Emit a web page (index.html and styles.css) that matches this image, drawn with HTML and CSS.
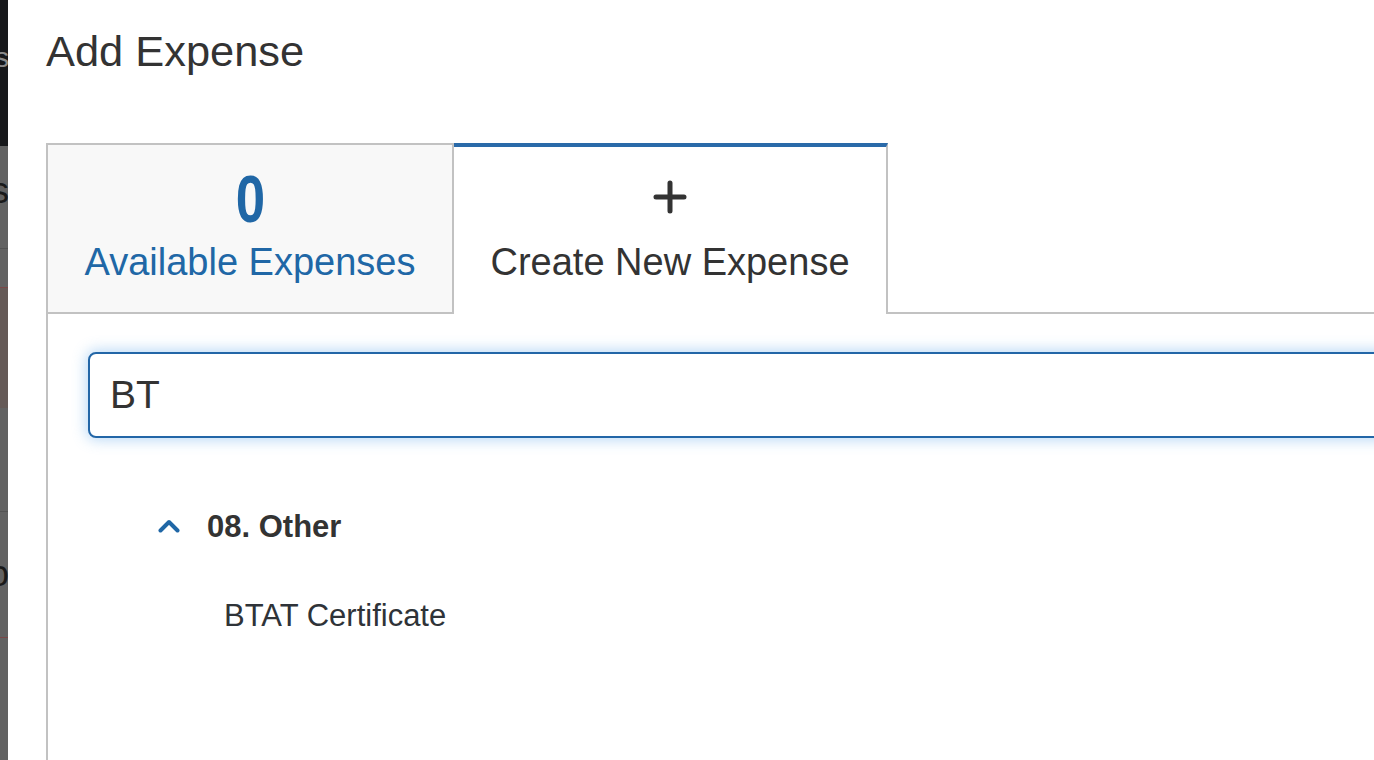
FILE: index.html
```html
<!DOCTYPE html>
<html lang="en">
<head>
<meta charset="utf-8">
<title>Add Expense</title>
<link rel="stylesheet" href="styles.css">
</head>
<body>
<div class="page">
  <div class="backdrop">
    <div class="seg seg-dark"><span class="peek peek-s">s</span></div>
    <div class="seg seg-gray1"><span class="peek peek-S">s</span></div>
    <div class="seg-line"></div>
    <div class="seg seg-gray2"></div>
    <div class="seg-line red"></div>
    <div class="seg seg-brown"></div>
    <div class="seg seg-gray3"></div>
    <div class="seg-line"></div>
    <div class="seg seg-gray4"><span class="peek peek-o">o</span></div>
    <div class="seg-line red"></div>
    <div class="seg seg-gray5"></div>
  </div>
  <div class="modal">
    <h4 class="modal-title">Add Expense</h4>
    <div class="tabs">
      <div class="tab tab-available">
        <div class="tab-count">0</div>
        <div class="tab-label">Available Expenses</div>
      </div>
      <div class="tab tab-create active">
        <div class="tab-icon">
          <svg width="34" height="34" viewBox="0 0 34 34"><path d="M3 17H31M17 3V31" stroke="#333" stroke-width="5" stroke-linecap="round" fill="none"/></svg>
        </div>
        <div class="tab-label">Create New Expense</div>
      </div>
      <div class="tab-fill"></div>
    </div>
    <div class="panel">
      <input class="search" type="text" value="BT">
      <div class="group">
        <div class="group-head">
          <svg class="chevron" width="22" height="14" viewBox="0 0 22 14"><path d="M2.5 11.5L11 3L19.5 11.5" stroke="#2067a6" stroke-width="4" stroke-linecap="round" stroke-linejoin="round" fill="none"/></svg>
          <span class="group-name">08. Other</span>
        </div>
        <div class="group-item">BTAT Certificate</div>
      </div>
    </div>
  </div>
</div>
</body>
</html>
```
FILE: styles.css
```css
html, body {
  margin: 0;
  padding: 0;
  height: 100%;
  overflow: hidden;
  background: #ffffff;
}
.page {
  display: flex;
  height: 760px;
  font-family: "Liberation Sans", Arial, sans-serif;
}
.backdrop {
  width: 8px;
  flex: 0 0 8px;
  display: flex;
  flex-direction: column;
  overflow: hidden;
}
.seg {
  display: flex;
  justify-content: flex-end;
  overflow: hidden;
  font-family: "Liberation Sans", Arial, sans-serif;
}
.seg-line { height: 1px; background: #535353; }
.seg-line.red { background: #7a4848; }
.seg-dark { height: 146px; background: #17181b; }
.seg-gray1 { height: 102px; background: #626262; }
.seg-gray2 { height: 38px; background: #626262; }
.seg-brown { height: 120px; background: #655a57; }
.seg-gray3 { height: 103px; background: #626262; }
.seg-gray4 { height: 125px; background: #626262; }
.seg-gray5 { flex: 1; background: #626262; }
.peek { flex: 0 0 auto; line-height: 1; }
.peek-s { color: #8a8a8a; font-size: 28px; margin-top: 44px; margin-right: -1px; }
.peek-S { color: #1a1a1a; font-size: 36px; margin-top: 27px; margin-right: -1px; }
.peek-o { color: #1a1a1a; font-size: 36px; margin-top: 44px; margin-right: -1px; }

.modal {
  flex: 1;
  background: #fff;
  padding: 30px 0 0 38px;
  min-width: 0;
}
.modal-title {
  margin: 0 0 71px 0;
  font-size: 43.4px;
  line-height: 42px;
  font-weight: normal;
  color: #333333;
}
.tabs {
  display: flex;
  height: 171px;
  width: 1400px;
}
.tab {
  box-sizing: border-box;
  height: 171px;
  display: flex;
  flex-direction: column;
  align-items: center;
}
.tab-available {
  width: 408px;
  border: 2px solid #c2c2c2;
  background: #f8f8f8;
  padding-top: 21px;
}
.tab-create {
  width: 434px;
  border-top: 4px solid #2a6aa9;
  border-right: 2px solid #c2c2c2;
  background: #fff;
  padding-top: 19px;
}
.tab-fill {
  flex: 1;
  border-bottom: 2px solid #c2c2c2;
}
.tab-count {
  font-family: "Liberation Sans Narrow", "Arial Narrow", "Liberation Sans", sans-serif;
  font-weight: bold;
  font-size: 66px;
  line-height: 66px;
  height: 66px;
  color: #2067a6;
  transform: scaleX(0.8);
}
.tab-icon {
  height: 66px;
  display: flex;
  align-items: flex-start;
  justify-content: center;
}
.tab-icon svg { margin-top: 14px; }
.tab-label {
  margin-top: 11px;
  font-size: 38px;
  line-height: 38px;
  white-space: nowrap;
}
.tab-available .tab-label { color: #2067a6; }
.tab-create .tab-label { color: #333333; }

.panel {
  border-left: 2px solid #c2c2c2;
  padding: 38px 0 0 40px;
  height: 446px;
  width: 1400px;
}
.search {
  display: block;
  box-sizing: border-box;
  width: 1400px;
  height: 86px;
  margin: 0;
  padding: 0 20px;
  border: 2px solid #2266a7;
  border-radius: 8px;
  outline: none;
  background: #fff;
  box-shadow: 0 0 14px 2px rgba(102, 170, 235, 0.45);
  font-family: "Liberation Sans", Arial, sans-serif;
  font-size: 39px;
  color: #333333;
}
.group {
  margin: 73px 0 0 70px;
}
.group-head {
  display: flex;
  align-items: center;
  height: 31px;
}
.chevron { flex: 0 0 auto; margin-right: 27px; margin-top: -2px; }
.group-name {
  font-size: 31px;
  line-height: 31px;
  font-weight: bold;
  color: #333333;
}
.group-item {
  margin: 59px 0 0 66px;
  font-size: 31px;
  line-height: 30px;
  color: #2f3338;
}
```
